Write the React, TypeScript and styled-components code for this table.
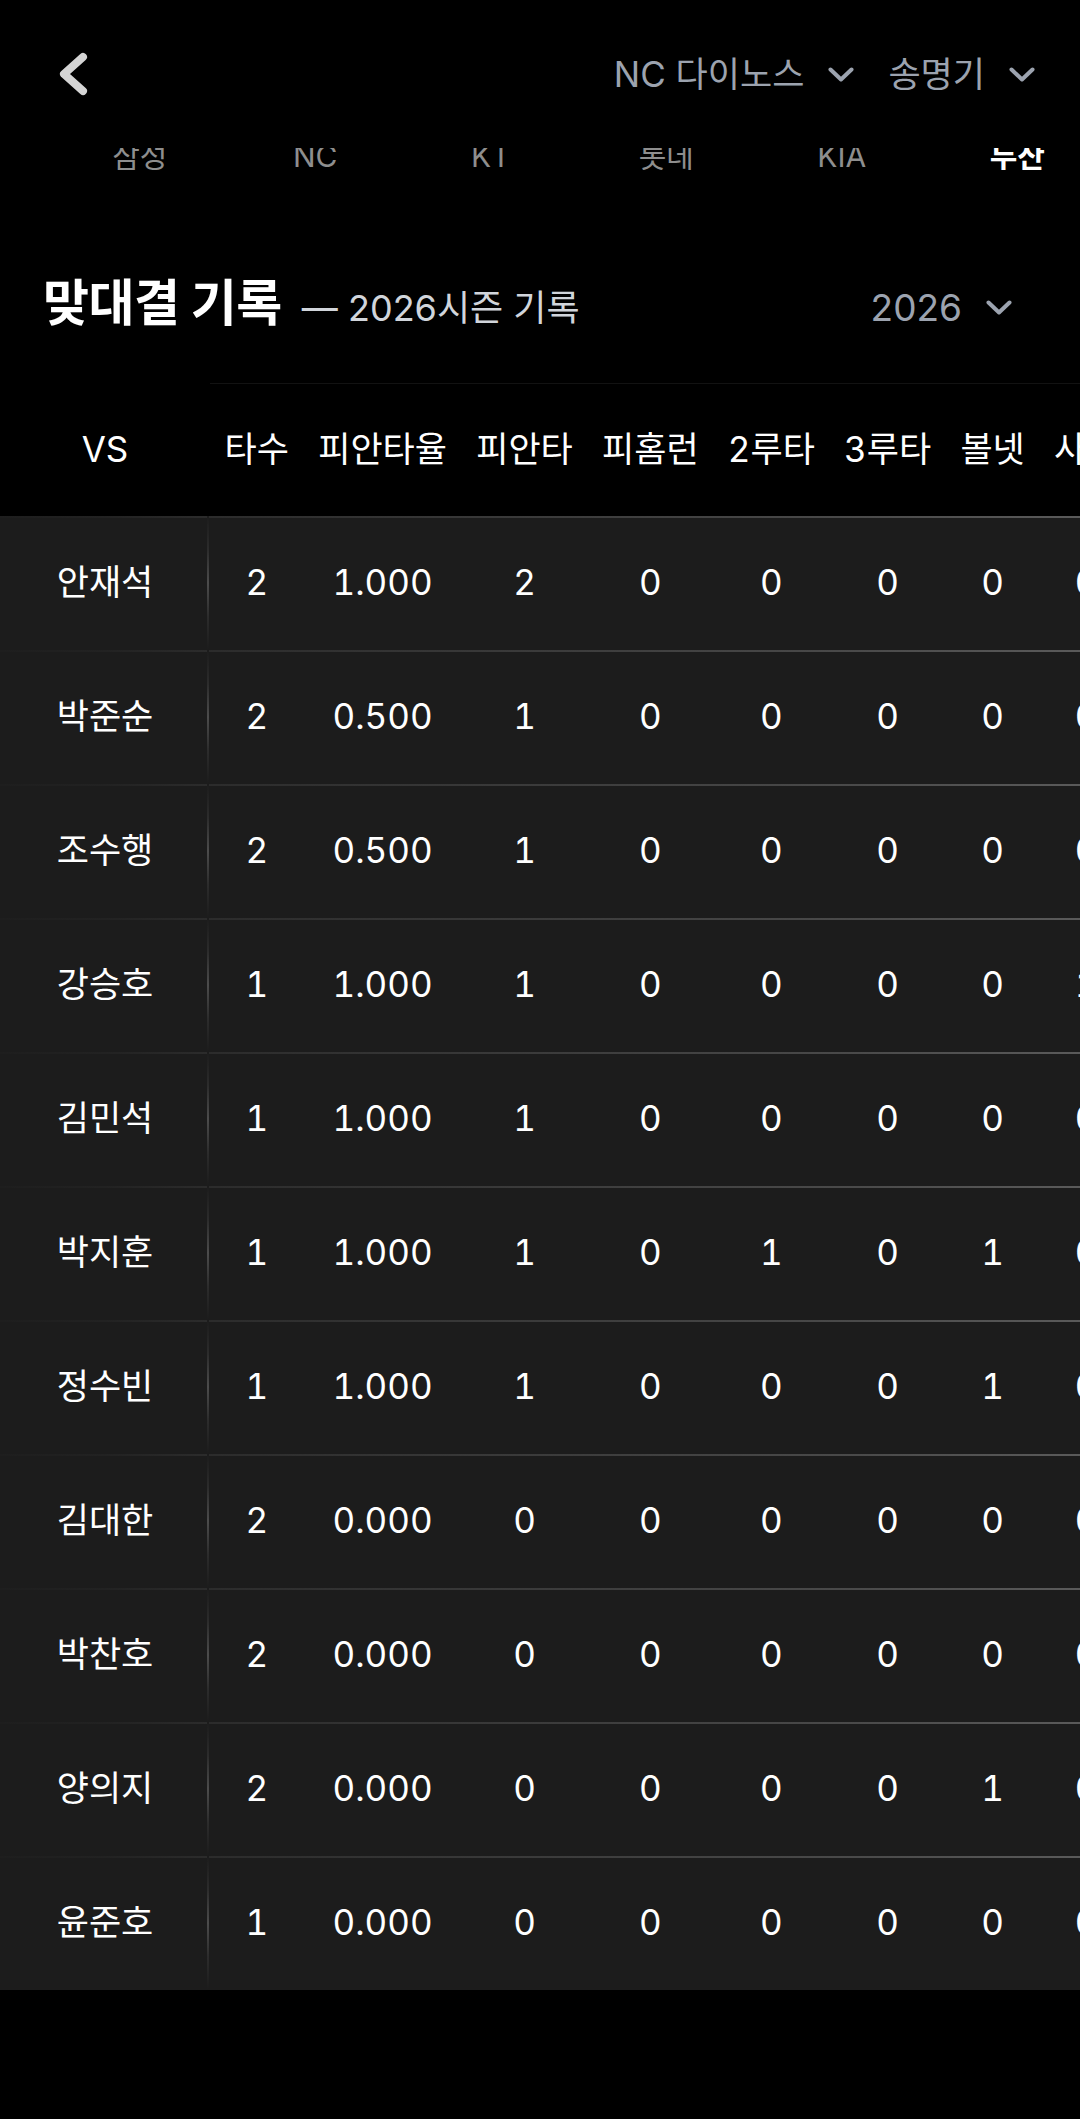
import React from "react";
import styled, { createGlobalStyle } from "styled-components";

const GlobalStyle = createGlobalStyle`
  html, body {
    margin: 0;
    padding: 0;
    background: #000;
  }
  body {
    font-family: "Inter", "Noto Sans CJK KR", "Noto Sans", sans-serif;
    color: #fff;
    -webkit-font-smoothing: antialiased;
  }
`;

const Page = styled.div`
  width: 1080px;
  min-height: 2119px;
  background: #000;
  overflow: hidden;
`;

const TopBar = styled.header`
  display: flex;
  align-items: center;
  height: 60px;
  margin-top: 44px;
  padding: 0 45px 0 54px;
`;

const BackButton = styled.button`
  display: flex;
  align-items: center;
  justify-content: center;
  padding: 0;
  border: 0;
  background: transparent;
  width: 40px;
  height: 52px;
`;

const Spacer = styled.div`
  flex: 1;
`;

const Selectors = styled.div`
  display: flex;
  align-items: center;
  gap: 34px;
`;

const Select = styled.div<{ $size?: number }>`
  display: flex;
  align-items: center;
  gap: 24px;
  font-size: ${(p) => p.$size ?? 35}px;
  line-height: 1;
  color: #9ca3af;
  white-space: nowrap;
`;

const TabStrip = styled.nav`
  display: flex;
  align-items: flex-start;
  height: 22px;
  margin-top: 44px;
  padding-left: 52px;
  overflow: hidden;
`;

const Tab = styled.div<{ $active?: boolean }>`
  flex: 0 0 175.5px;
  margin-top: -7px;
  text-align: center;
  font-size: 30px;
  line-height: 1;
  color: ${(p) => (p.$active ? "#ffffff" : "#8e8e8e")};
  font-weight: ${(p) => (p.$active ? 700 : 400)};
  white-space: nowrap;
`;

const TitleRow = styled.section`
  display: flex;
  align-items: baseline;
  margin-top: 108px;
  padding: 0 68px 0 43px;
`;

const Title = styled.h2`
  margin: 0;
  font-size: 50px;
  font-weight: 700;
  line-height: 1;
  color: #fff;
  letter-spacing: -0.5px;
`;

const Subtitle = styled.span`
  margin-left: 20px;
  font-size: 36px;
  line-height: 1;
  color: #d1d5db;
`;

const YearSelect = styled(Select)`
  margin-left: auto;
  gap: 24px;
`;

const TableWrap = styled.div`
  margin-top: 55px;
  width: 1080px;
  overflow: hidden;
`;

const Table = styled.table`
  border-collapse: collapse;
  border-spacing: 0;
  white-space: nowrap;
  font-variant-numeric: tabular-nums;
`;

const HeadRow = styled.tr`
  height: 132px;
  background: #000;
`;

const HeadCell = styled.th<{ $first?: boolean }>`
  padding: 0 14.6px;
  font-size: 35px;
  font-weight: 400;
  line-height: 1;
  color: #fff;
  text-align: center;
  ${(p) =>
    p.$first
      ? `width: 210px; min-width: 210px; max-width: 210px; padding: 0; box-sizing: border-box;`
      : `border-top: 1px solid #121212;`}
`;

const BodyRow = styled.tr`
  height: 134px;
  background:
    linear-gradient(to right, #222 0%, #333 30%, #4a4a4a 70%, #5e5e5e 92%, #555 100%) top / 100% 2px no-repeat,
    #1c1c1c;
`;

const NameCell = styled.td`
  width: 210px;
  min-width: 210px;
  max-width: 210px;
  box-sizing: border-box;
  padding: 0;
  text-align: center;
  font-size: 35px;
  line-height: 1;
  color: #fff;
  background:
    linear-gradient(to bottom, #1c1c1c 0%, #2c2c2c 25%, #4c4c4c 50%, #2c2c2c 75%, #1c1c1c 100%) right 1px top / 2px 100% no-repeat,
    linear-gradient(to right, #1e1e1e 0%, #222 50%, #2c2c2c 100%) top / 100% 2px no-repeat,
    #1c1c1c;
`;

const StatCell = styled.td`
  padding: 0 14.6px;
  text-align: center;
  font-size: 35px;
  line-height: 1;
  color: #fff;
`;

const Chevron = ({ w = 26, h = 15 }: { w?: number; h?: number }) => (
  <svg width={w} height={h} viewBox="0 0 26 15" fill="none">
    <polyline
      points="2.5,2.5 13,12.5 23.5,2.5"
      stroke="#9ca3af"
      strokeWidth="4"
      strokeLinecap="round"
      strokeLinejoin="round"
    />
  </svg>
);

const BackIcon = () => (
  <svg width="40" height="52" viewBox="0 0 40 52" fill="none">
    <polyline
      points="29,9 10,26 29,43"
      stroke="#d4d4d4"
      strokeWidth="8"
      strokeLinecap="round"
      strokeLinejoin="round"
    />
  </svg>
);

const tabs = ["삼성", "NC", "KT", "롯데", "KIA", "두산"];

const columns = ["타수", "피안타율", "피안타", "피홈런", "2루타", "3루타", "볼넷", "사구", "삼진"];

type Row = { name: string; values: (string | number)[] };

const rows: Row[] = [
  { name: "안재석", values: [2, "1.000", 2, 0, 0, 0, 0, 0, 0] },
  { name: "박준순", values: [2, "0.500", 1, 0, 0, 0, 0, 0, 0] },
  { name: "조수행", values: [2, "0.500", 1, 0, 0, 0, 0, 0, 1] },
  { name: "강승호", values: [1, "1.000", 1, 0, 0, 0, 0, 1, 0] },
  { name: "김민석", values: [1, "1.000", 1, 0, 0, 0, 0, 0, 0] },
  { name: "박지훈", values: [1, "1.000", 1, 0, 1, 0, 1, 0, 0] },
  { name: "정수빈", values: [1, "1.000", 1, 0, 0, 0, 1, 0, 0] },
  { name: "김대한", values: [2, "0.000", 0, 0, 0, 0, 0, 0, 1] },
  { name: "박찬호", values: [2, "0.000", 0, 0, 0, 0, 0, 0, 0] },
  { name: "양의지", values: [2, "0.000", 0, 0, 0, 0, 1, 0, 0] },
  { name: "윤준호", values: [1, "0.000", 0, 0, 0, 0, 0, 0, 1] },
];

export default function App() {
  return (
    <Page>
      <GlobalStyle />
      <TopBar>
        <BackButton aria-label="뒤로">
          <BackIcon />
        </BackButton>
        <Spacer />
        <Selectors>
          <Select>
            NC 다이노스
            <Chevron />
          </Select>
          <Select>
            송명기
            <Chevron />
          </Select>
        </Selectors>
      </TopBar>

      <TabStrip>
        {tabs.map((t) => (
          <Tab key={t} $active={t === "두산"}>
            {t}
          </Tab>
        ))}
      </TabStrip>

      <TitleRow>
        <Title>맞대결 기록</Title>
        <Subtitle>— 2026시즌 기록</Subtitle>
        <YearSelect $size={37}>
          2026
          <Chevron />
        </YearSelect>
      </TitleRow>

      <TableWrap>
        <Table>
          <thead>
            <HeadRow>
              <HeadCell $first>VS</HeadCell>
              {columns.map((c) => (
                <HeadCell key={c}>{c}</HeadCell>
              ))}
            </HeadRow>
          </thead>
          <tbody>
            {rows.map((r) => (
              <BodyRow key={r.name}>
                <NameCell>{r.name}</NameCell>
                {r.values.map((v, i) => (
                  <StatCell key={i}>{v}</StatCell>
                ))}
              </BodyRow>
            ))}
          </tbody>
        </Table>
      </TableWrap>
    </Page>
  );
}
